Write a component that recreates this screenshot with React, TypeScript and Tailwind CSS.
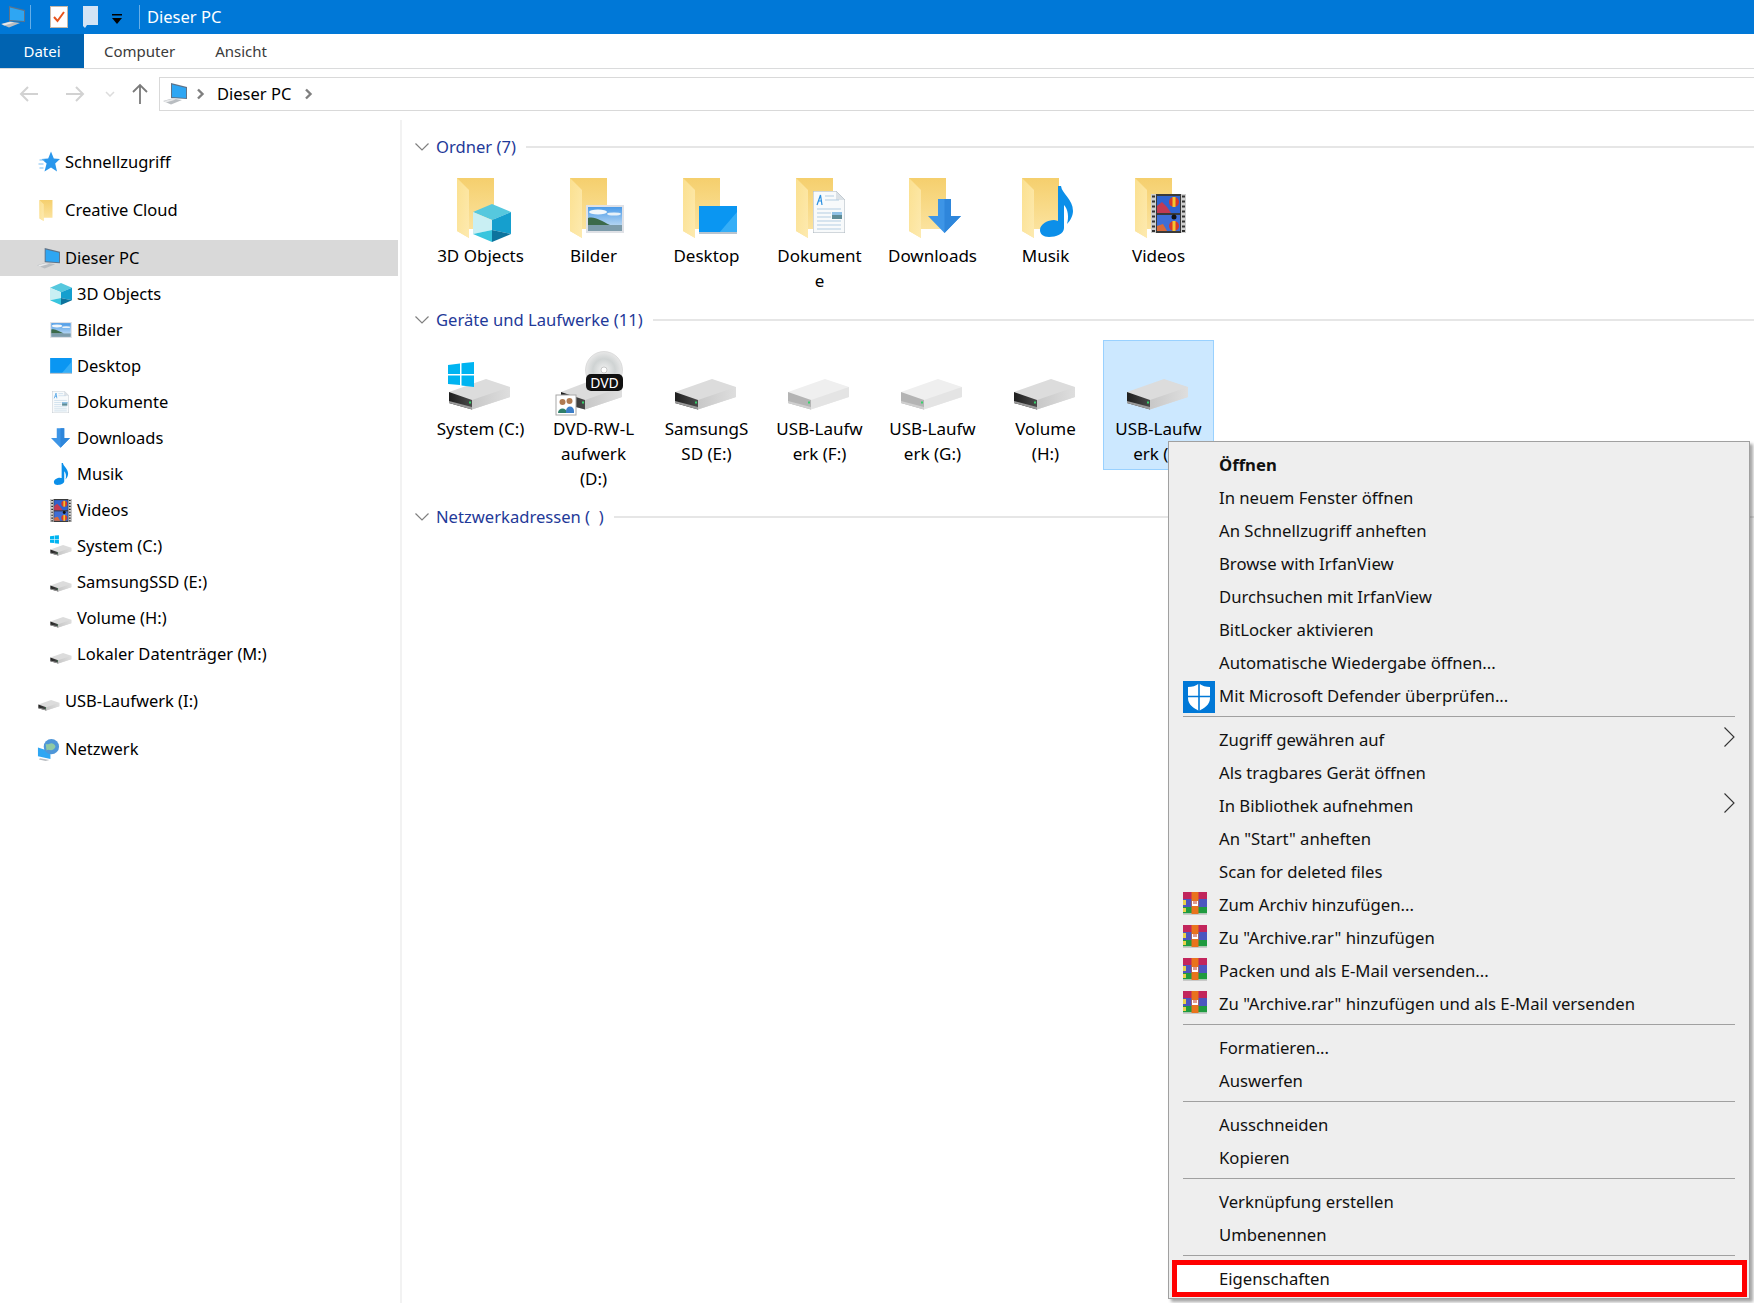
import React from 'react';

type G = React.SVGProps<SVGSVGElement>;

const FONT = "font-['Noto_Sans',sans-serif]";

function Defs() {
  return (
    <svg className="absolute w-0 h-0">
      <defs>
        <linearGradient id="fBack" x1="0" y1="0" x2="0" y2="1">
          <stop offset="0" stopColor="#f5cf6d" />
          <stop offset="1" stopColor="#fce6a6" />
        </linearGradient>
        <linearGradient id="fFlap" x1="0" y1="0" x2="1" y2="1">
          <stop offset="0" stopColor="#fbe08f" />
          <stop offset="1" stopColor="#fdeab0" />
        </linearGradient>
        <linearGradient id="sky" x1="0" y1="0" x2="0" y2="1">
          <stop offset="0" stopColor="#4b9be8" />
          <stop offset="1" stopColor="#d4e6f5" />
        </linearGradient>
        <linearGradient id="driveFront" x1="0" y1="0" x2="1" y2="0">
          <stop offset="0" stopColor="#1f1f1f" />
          <stop offset="1" stopColor="#4a4a4a" />
        </linearGradient>
        <linearGradient id="driveRight" x1="0" y1="0" x2="1" y2="0">
          <stop offset="0" stopColor="#c8c8c8" />
          <stop offset="1" stopColor="#dedede" />
        </linearGradient>
        <radialGradient id="disc">
          <stop offset="0" stopColor="#f2f2f2" />
          <stop offset="0.6" stopColor="#cfd3d3" />
          <stop offset="1" stopColor="#e8e8e8" />
        </radialGradient>
      </defs>
    </svg>
  );
}

function PcIcon(p: G) {
  return (
    <svg viewBox="0 0 24 22" {...p}>
      <polygon points="8,0 24,4 24,16 8,15" fill="#5f7388" />
      <polygon points="9,1.5 23,5 23,15 9,14" fill="#2ea6f3" />
      <polygon points="0,18 9,15.5 19,17 8,21.5" fill="#b9bdc1" />
      <polygon points="1,18 9,16 13,16.6 3,19.4" fill="#e9eaeb" />
    </svg>
  );
}

function StarIcon(p: G) {
  return (
    <svg viewBox="0 0 22 22" {...p}>
      <polygon points="13,0.5 15.8,7.6 22,8 17.2,12.6 19,20.5 13,16.4 6.5,20.5 8.6,12.6 3.5,8 10.2,7.6" fill="#2a97ec" />
      <path d="M1.5 9h5M0.5 13h5M1.5 17h4" stroke="#7cc0f4" strokeWidth="1.2" />
    </svg>
  );
}

function FolderBase() {
  return (
    <>
      <polygon points="9,1 46,1 46,52 21,52 21,61 9,54" fill="url(#fBack)" />
      <polygon points="9,1 21,13 21,61 9,54" fill="url(#fFlap)" />
    </>
  );
}

function FolderIcon({ children }: { children?: React.ReactNode }) {
  return (
    <svg viewBox="0 0 64 64" width="64" height="64" className="overflow-visible">
      <FolderBase />
      {children}
    </svg>
  );
}

function CubeGlyph(p: G) {
  return (
    <svg viewBox="0 0 38 38" {...p}>
      <polygon points="19,0 38,8 19,16 0,8" fill="#56c8de" />
      <polygon points="0,8 19,16 19,26 0,30" fill="#c9eff3" />
      <polygon points="38,8 19,16 19,26 38,30" fill="#159fce" />
      <polygon points="0,30 19,26 19,38" fill="#38c5de" />
      <polygon points="38,30 19,26 19,38" fill="#0d739d" />
    </svg>
  );
}

function PictureGlyph(p: G) {
  return (
    <svg viewBox="0 0 38 28" {...p}>
      <rect width="38" height="28" fill="#dfe1e6" />
      <rect x="2" y="2" width="34" height="24" fill="url(#sky)" />
      <ellipse cx="12" cy="7" rx="9" ry="2.5" fill="#f2f7fb" />
      <ellipse cx="28" cy="9" rx="7" ry="1.6" fill="#e8f1f8" />
      <path d="M2 13 C9 11 15 16 24 20 L2 20Z" fill="#3c6a4a" />
      <rect x="2" y="20" width="34" height="6" fill="#7d9cab" />
    </svg>
  );
}

function DesktopGlyph(p: G) {
  return (
    <svg viewBox="0 0 38 28" {...p}>
      <rect width="38" height="27" fill="#0a96f2" />
      <polygon points="20,27 38,6 38,27" fill="#35aef7" />
      <rect y="26" width="38" height="2" fill="#b8c4cf" />
    </svg>
  );
}

function DocGlyph(p: G) {
  return (
    <svg viewBox="0 0 32 42" {...p}>
      <polygon points="0,0 23,0 32,9 32,42 0,42" fill="#f8fafb" stroke="#aab4bc" strokeWidth="1" />
      <polygon points="23,0 32,9 23,9" fill="#dbe1e6" />
      <path d="M4 14 L7.5 4 L9 14 M5.5 10 H9" fill="none" stroke="#2a8fe0" strokeWidth="1.2" />
      <path d="M12 5h9M12 9h14M4 18h24M4 22h14M4 26h14M4 30h24M4 34h24M4 38h24" stroke="#b3cde2" strokeWidth="1" />
      <rect x="19" y="21" width="10" height="7" fill="#5f8c96" />
      <rect x="19" y="21" width="10" height="3" fill="#8fc0e4" />
    </svg>
  );
}

function ArrowGlyph(p: G) {
  return (
    <svg viewBox="0 0 33 34" {...p}>
      <polygon points="10,0 23,0 23,17 33,17 16.5,34 0,17 10,17" fill="#3d95e6" />
      <polygon points="16.5,0 23,0 23,17 33,17 16.5,34" fill="#2e86db" />
    </svg>
  );
}

function NoteGlyph(p: G) {
  return (
    <svg viewBox="0 0 33 51" {...p}>
      <path
        d="M18 0 h3 C22 8 33 13 33 25 C33 30 30 35 27 38 C29 31 28 23 24 19 V42 C24 48 16 51 9 51 C3 51 0 48 0 44 C0 38 8 34 14 34 C16 34 17 35 18 35 Z"
        fill="#0c8fe9"
      />
    </svg>
  );
}

function FilmGlyph(p: G) {
  return (
    <svg viewBox="0 0 35 39" {...p}>
      <rect width="35" height="39" fill="#3a3a3a" />
      <rect x="0" width="5" height="39" fill="#cfcfcf" />
      <rect x="30" width="5" height="39" fill="#cfcfcf" />
      <path d="M1 2.5h3M1 7.5h3M1 12.5h3M1 17.5h3M1 22.5h3M1 27.5h3M1 32.5h3M1 37h3M31 2.5h3M31 7.5h3M31 12.5h3M31 17.5h3M31 22.5h3M31 27.5h3M31 32.5h3M31 37h3" stroke="#333" strokeWidth="2" />
      <rect x="6" y="2" width="23" height="17" fill="#2f63cf" />
      <rect x="6" y="21" width="23" height="16" fill="#3f6ed6" />
      <polygon points="6,19 6,12 11,8 16,13 20,19" fill="#c23a52" />
      <polygon points="6,37 6,32 12,30 16,37" fill="#d86a3a" />
      <circle cx="23" cy="8" r="5" fill="#d8392b" />
      <rect x="21.5" y="3" width="3" height="10" fill="#f3c530" />
      <circle cx="23" cy="32" r="5" fill="#d8392b" />
      <rect x="21.5" y="27" width="3" height="10" fill="#f3c530" />
      <circle cx="23" cy="23" r="2.5" fill="#111" />
    </svg>
  );
}

function DriveShape({ light = false }: { light?: boolean }) {
  return (
    <>
      <polygon points="38,29 62,37 62,47 24,59.5 1,53 1,42" fill={light ? '#efefef' : '#dcdcdc'} />
      <polygon points="1,42 24,50 24,59.5 1,53" fill={light ? '#b4b4b4' : 'url(#driveFront)'} />
      <polygon points="24,50 62,37 62,47 24,59.5" fill={light ? '#e4e4e4' : 'url(#driveRight)'} />
      <polygon points="1,51 24,57 24,59.5 1,53" fill={light ? '#cfcfcf' : '#9a9a9a'} />
      <rect x="21" y="51.5" width="2" height="2" fill="#34d36a" />
    </>
  );
}

function DriveIcon({ light = false, children }: { light?: boolean; children?: React.ReactNode }) {
  return (
    <svg viewBox="0 0 64 64" width="64" height="64" className="overflow-visible">
      <DriveShape light={light} />
      {children}
    </svg>
  );
}

function SmallDrive({ children }: { children?: React.ReactNode }) {
  return (
    <svg viewBox="0 0 64 64" width="22" height="22" className="overflow-visible">
      <DriveShape />
      {children}
    </svg>
  );
}

function WinLogo(p: G) {
  return (
    <svg viewBox="0 0 26 25" {...p}>
      <polygon points="0,3 12,1.5 12,12 0,12" fill="#00b4f1" />
      <polygon points="13.5,1.2 26,0 26,12 13.5,12" fill="#00b4f1" />
      <polygon points="0,13.5 12,13.5 12,23 0,22" fill="#00b4f1" />
      <polygon points="13.5,13.5 26,13.5 26,25 13.5,23.5" fill="#00b4f1" />
    </svg>
  );
}

function DvdDrive() {
  return (
    <svg viewBox="0 0 64 64" width="64" height="64" className="overflow-visible">
      <polygon points="34,29 61,37 61,47 24,59.5 0,53 0,42" fill="#dcdcdc" />
      <polygon points="0,42 24,50 24,59.5 0,53" fill="url(#driveFront)" />
      <polygon points="24,50 61,37 61,47 24,59.5" fill="url(#driveRight)" />
      <rect x="21" y="51.5" width="2" height="2" fill="#34d36a" />
      <circle cx="43" cy="20" r="18.5" fill="url(#disc)" stroke="#c4c4c4" strokeWidth="0.5" />
      <circle cx="43" cy="20" r="3" fill="#fff" stroke="#aaa" strokeWidth="0.6" />
      <rect x="25" y="24" width="37" height="17" rx="5" fill="#111" />
      <text x="43.5" y="37.5" fontSize="14" textAnchor="middle" fill="#fff" fontFamily="Noto Sans, sans-serif">DVD</text>
      <rect x="-5" y="45" width="20" height="20" fill="#fff" stroke="#a8a8a8" />
      <circle cx="1.5" cy="52" r="3" fill="#b07a50" />
      <circle cx="8.5" cy="51" r="3" fill="#b07a50" />
      <path d="M-3 63 C-3 57 6 57 6 63Z" fill="#2f7f6a" />
      <path d="M5 61 C5 55 13 55 13 61 V63 H5Z" fill="#3c7ec8" />
    </svg>
  );
}

function ShieldIcon() {
  return (
    <svg viewBox="0 0 32 32" width="32" height="32">
      <rect width="32" height="32" fill="#0078d7" />
      <path d="M16 2.5 C19 5 23 6 27 6 V17 C27 24 21 27 16 30 C11 27 5 24 5 17 V6 C9 6 13 5 16 2.5Z" fill="#fff" />
      <path d="M16 2v28M5 15.5h22" stroke="#0078d7" strokeWidth="1.6" />
    </svg>
  );
}

function RarIcon() {
  return (
    <svg viewBox="0 0 24 23" width="24" height="23" className="mt-[-5px]">
      <rect y="0" width="24" height="7" fill="#c2255c" />
      <rect y="7" width="24" height="8" fill="#4c55bf" />
      <rect y="15" width="24" height="6.5" fill="#1f9a3f" />
      <rect y="21.5" width="24" height="1.5" fill="#c9c9c9" />
      <rect x="0" y="8" width="3" height="5" fill="#e8d24a" />
      <rect x="0" y="16" width="3" height="4" fill="#e8d24a" />
      <rect x="8.5" y="0" width="7" height="22" fill="#e9731d" />
      <rect x="9" y="9" width="6" height="5" fill="#fff" />
      <path d="M11 9v3M13 9v3" stroke="#c0392b" strokeWidth="1" />
    </svg>
  );
}

function Chevron({ className }: { className?: string }) {
  return (
    <svg viewBox="0 0 9 12" width="9" height="12" className={className}>
      <polyline points="2,1.5 6.5,6 2,10.5" fill="none" stroke="#7f7f7f" strokeWidth="2.4" />
    </svg>
  );
}

function TitleBar() {
  return (
    <div className="flex items-center h-[34px] bg-[#0078d7] text-white">
      <PcIcon width={24} height={22} className="ml-[1px]" />
      <div className="ml-[5px] w-px h-[24px] bg-[#66aee8]" />
      <svg viewBox="0 0 18 22" width="18" height="22" className="ml-[19px]">
        <rect x="0.5" y="0.5" width="17" height="21" fill="#fff" stroke="#c9b9a8" />
        <polyline points="4,11 7.5,15 14,6" fill="none" stroke="#e8541c" strokeWidth="2" />
      </svg>
      <svg viewBox="0 0 15 22" width="15" height="22" className="ml-[15px]">
        <polygon points="0,0 15,0 15,19 4,19 2,22 0,20" fill="#d3e4f5" />
      </svg>
      <svg viewBox="0 0 11 10" width="11" height="10" className="ml-[14px] mt-[3px]">
        <rect width="10" height="1.5" fill="#000" />
        <polygon points="0,4 10,4 5,10" fill="#000" />
      </svg>
      <div className="ml-[16px] w-px h-[24px] bg-[#66aee8]" />
      <span className="ml-[7px] text-[16.5px]">Dieser PC</span>
    </div>
  );
}

function RibbonTabs() {
  return (
    <div className="flex items-center h-[35px] bg-white border-b border-[#dadbdc] text-[15px] text-[#3b3b3b]">
      <div className="flex items-center justify-center w-[84px] h-[34px] bg-[#0063b1] text-white">Datei</div>
      <span className="ml-[20px]">Computer</span>
      <span className="ml-[40px]">Ansicht</span>
    </div>
  );
}

function AddressRow() {
  return (
    <div className="flex items-center h-[51px] pb-[2px]">
      <svg viewBox="0 0 20 16" width="20" height="16" className="ml-[19px]">
        <path d="M19 8H2M9 1L2 8l7 7" fill="none" stroke="#d2d2d2" strokeWidth="2" />
      </svg>
      <svg viewBox="0 0 20 16" width="20" height="16" className="ml-[26px]">
        <path d="M1 8h17M11 1l7 7-7 7" fill="none" stroke="#d2d2d2" strokeWidth="2" />
      </svg>
      <svg viewBox="0 0 10 6" width="10" height="6" className="ml-[20px]">
        <polyline points="1,1 5,5 9,1" fill="none" stroke="#dcdcdc" strokeWidth="1.5" />
      </svg>
      <svg viewBox="0 0 16 22" width="16" height="22" className="ml-[17px]">
        <path d="M8 21V2M1 9l7-7 7 7" fill="none" stroke="#7a7a7a" strokeWidth="1.8" />
      </svg>
      <div className="flex items-center flex-1 ml-[11px] -mr-[4px] h-[34px] border border-[#d9d9d9] text-[16.5px] text-black">
        <PcIcon width={24} height={22} className="ml-[3px]" />
        <Chevron className="ml-[9px]" />
        <span className="ml-[12px] pt-px">Dieser PC</span>
        <Chevron className="ml-[13px]" />
      </div>
    </div>
  );
}

function SideRow({ icon, label, indent = false, active = false, mt = '' }: { icon: React.ReactNode; label: string; indent?: boolean; active?: boolean; mt?: string }) {
  return (
    <div className={`flex items-center h-[36px] ${active ? 'bg-[#d9d9d9]' : ''} ${indent ? 'pl-[49px]' : 'pl-[37px]'} ${mt}`}>
      <div className="flex items-center justify-center w-[23px] h-[23px] shrink-0">{icon}</div>
      <span className="ml-[5px] pt-px whitespace-nowrap">{label}</span>
    </div>
  );
}

function Sidebar() {
  return (
    <nav className="w-[398px] shrink-0 pt-[24px] text-[16.5px] text-black">
      <SideRow icon={<StarIcon width={22} height={22} />} label="Schnellzugriff" />
      <SideRow mt="mt-[12px]" icon={<svg viewBox="9 1 37 60" width="14" height="21" className="mr-[6px]"><FolderBase /></svg>} label="Creative Cloud" />
      <SideRow mt="mt-[12px]" active icon={<PcIcon width={23} height={21} />} label="Dieser PC" />
      <SideRow indent icon={<CubeGlyph width={22} height={22} />} label="3D Objects" />
      <SideRow indent icon={<PictureGlyph width={22} height={16} />} label="Bilder" />
      <SideRow indent icon={<DesktopGlyph width={22} height={16} />} label="Desktop" />
      <SideRow indent icon={<DocGlyph width={17} height={22} />} label="Dokumente" />
      <SideRow indent icon={<ArrowGlyph width={19} height={20} />} label="Downloads" />
      <SideRow indent icon={<NoteGlyph width={16} height={22} />} label="Musik" />
      <SideRow indent icon={<FilmGlyph width={22} height={23} />} label="Videos" />
      <SideRow indent icon={<SmallDrive><WinLogo x={0} y={0} width={26} height={26} /></SmallDrive>} label="System (C:)" />
      <SideRow indent icon={<SmallDrive />} label="SamsungSSD (E:)" />
      <SideRow indent icon={<SmallDrive />} label="Volume (H:)" />
      <SideRow indent icon={<SmallDrive />} label="Lokaler Datenträger (M:)" />
      <SideRow mt="mt-[11px]" icon={<SmallDrive />} label="USB-Laufwerk (I:)" />
      <SideRow
        mt="mt-[12px]"
        icon={
          <svg viewBox="0 0 24 24" width="23" height="23">
            <polygon points="1,10 14,14 14,22 1,19" fill="#2ea6f3" />
            <circle cx="15" cy="9" r="8" fill="#4e96d8" />
            <path d="M9 6c3 2 5-2 8 0s3 4 0 6-5-1-7 1" fill="#8fc9a4" />
            <polygon points="3,21 13,23 9,24 2,22.5" fill="#b9bdc1" />
          </svg>
        }
        label="Netzwerk"
      />
    </nav>
  );
}

function SectionHeader({ title, className }: { title: string; className?: string }) {
  return (
    <div className={`flex items-center h-[24px] pl-[13px] ${className ?? ''}`}>
      <svg viewBox="0 0 14 8" width="14" height="8">
        <polyline points="0.5,0.5 7,7 13.5,0.5" fill="none" stroke="#808080" strokeWidth="1.2" />
      </svg>
      <span className="ml-[7px] text-[16.6px] text-[#1f3a99] whitespace-pre">{title}</span>
      <div className="ml-[10px] flex-1 h-[2px] bg-[#e6e6e6]" />
    </div>
  );
}

function Tile({ icon, lines, selected = false }: { icon: React.ReactNode; lines: string[]; selected?: boolean }) {
  return (
    <div className={`w-[111px] mx-[1px] pt-[9px] pb-[3px] flex flex-col items-center border box-border ${selected ? 'bg-[#cce8ff] border-[#99d1ff]' : 'border-transparent'}`}>
      <div className="w-[64px] h-[64px] mr-[2px]">{icon}</div>
      <div className="mt-[2px] text-center text-[17px] leading-[25px] text-black whitespace-nowrap">
        {lines.map((l) => (
          <div key={l}>{l}</div>
        ))}
      </div>
    </div>
  );
}

function Content() {
  return (
    <main className="flex-1 pt-[15px]">
      <SectionHeader title="Ordner (7)" />
      <div className="flex items-start mt-[8px] pl-[22px]">
        <Tile lines={['3D Objects']} icon={<FolderIcon><CubeGlyph x={25} y={27} width={38} height={38} /></FolderIcon>} />
        <Tile lines={['Bilder']} icon={<FolderIcon><PictureGlyph x={25} y={28} width={38} height={28} /></FolderIcon>} />
        <Tile lines={['Desktop']} icon={<FolderIcon><DesktopGlyph x={25} y={29} width={38} height={28} /></FolderIcon>} />
        <Tile lines={['Dokument', 'e']} icon={<FolderIcon><DocGlyph x={26} y={14} width={32} height={42} /></FolderIcon>} />
        <Tile lines={['Downloads']} icon={<FolderIcon><ArrowGlyph x={28} y={22} width={33} height={34} /></FolderIcon>} />
        <Tile lines={['Musik']} icon={<FolderIcon><NoteGlyph x={27} y={9} width={33} height={51} /></FolderIcon>} />
        <Tile lines={['Videos']} icon={<FolderIcon><FilmGlyph x={25} y={17} width={35} height={39} /></FolderIcon>} />
      </div>
      <SectionHeader title="Geräte und Laufwerke (11)" className="mt-[11px]" />
      <div className="flex items-start mt-[8px] pl-[22px]">
        <Tile lines={['System (C:)']} icon={<DriveIcon><WinLogo x={0} y={12} width={26} height={25} /></DriveIcon>} />
        <Tile lines={['DVD-RW-L', 'aufwerk', '(D:)']} icon={<DvdDrive />} />
        <Tile lines={['SamsungS', 'SD (E:)']} icon={<DriveIcon />} />
        <Tile lines={['USB-Laufw', 'erk (F:)']} icon={<DriveIcon light />} />
        <Tile lines={['USB-Laufw', 'erk (G:)']} icon={<DriveIcon light />} />
        <Tile lines={['Volume', '(H:)']} icon={<DriveIcon />} />
        <Tile selected lines={['USB-Laufw', 'erk (I:)']} icon={<DriveIcon />} />
      </div>
      <SectionHeader title="Netzwerkadressen (  )" className="mt-[10px]" />
    </main>
  );
}

function MenuRow({ label, icon, bold = false, sub = false }: { label: string; icon?: React.ReactNode; bold?: boolean; sub?: boolean }) {
  return (
    <div className="relative flex items-center h-[33px] pl-[14px] pr-[14px]">
      <div className="flex items-center w-[36px] h-[33px] shrink-0">{icon}</div>
      <span className={`whitespace-nowrap -mt-[2px] ${bold ? 'font-bold' : ''}`}>{label}</span>
      {sub && (
        <svg viewBox="0 0 11 20" width="11" height="20" className="ml-auto -mt-[7px]">
          <polyline points="0.5,0.5 10,10 0.5,19.5" fill="none" stroke="#333" strokeWidth="1.1" />
        </svg>
      )}
    </div>
  );
}

function Sep() {
  return <div className="h-px mx-[14px] mt-[3px] mb-[7px] bg-[#a0a0a0]" />;
}

function ContextMenu() {
  return (
    <div className="absolute left-[1168px] top-[441px] w-[582px] pt-[7px] pb-[2px] bg-[#eeeeee] border border-[#a0a0a0] shadow-[3px_3px_3px_rgba(0,0,0,0.35)] text-[16.7px] text-[#111]">
      <MenuRow bold label="Öffnen" />
      <MenuRow label="In neuem Fenster öffnen" />
      <MenuRow label="An Schnellzugriff anheften" />
      <MenuRow label="Browse with IrfanView" />
      <MenuRow label="Durchsuchen mit IrfanView" />
      <MenuRow label="BitLocker aktivieren" />
      <MenuRow label="Automatische Wiedergabe öffnen..." />
      <MenuRow label="Mit Microsoft Defender überprüfen..." icon={<ShieldIcon />} />
      <Sep />
      <MenuRow sub label="Zugriff gewähren auf" />
      <MenuRow label="Als tragbares Gerät öffnen" />
      <MenuRow sub label="In Bibliothek aufnehmen" />
      <MenuRow label={'An "Start" anheften'} />
      <MenuRow label="Scan for deleted files" />
      <MenuRow label="Zum Archiv hinzufügen..." icon={<RarIcon />} />
      <MenuRow label={'Zu "Archive.rar" hinzufügen'} icon={<RarIcon />} />
      <MenuRow label="Packen und als E-Mail versenden..." icon={<RarIcon />} />
      <MenuRow label={'Zu "Archive.rar" hinzufügen und als E-Mail versenden'} icon={<RarIcon />} />
      <Sep />
      <MenuRow label="Formatieren..." />
      <MenuRow label="Auswerfen" />
      <Sep />
      <MenuRow label="Ausschneiden" />
      <MenuRow label="Kopieren" />
      <Sep />
      <MenuRow label="Verknüpfung erstellen" />
      <MenuRow label="Umbenennen" />
      <Sep />
      <div className="relative">
        <div className="absolute left-[3px] right-[2px] -top-[3px] -bottom-[1px] bg-white border-[5px] border-[#ff0000]" />
        <MenuRow label="Eigenschaften" />
      </div>
    </div>
  );
}

export default function App() {
  return (
    <div className={`relative w-[1754px] h-[1303px] overflow-hidden bg-white ${FONT}`}>
      <Defs />
      <TitleBar />
      <RibbonTabs />
      <AddressRow />
      <div className="flex h-[1183px]">
        <Sidebar />
        <div className="w-[2px] ml-[2px] shrink-0 bg-[#f2f2f2]" />
        <Content />
      </div>
      <ContextMenu />
    </div>
  );
}
